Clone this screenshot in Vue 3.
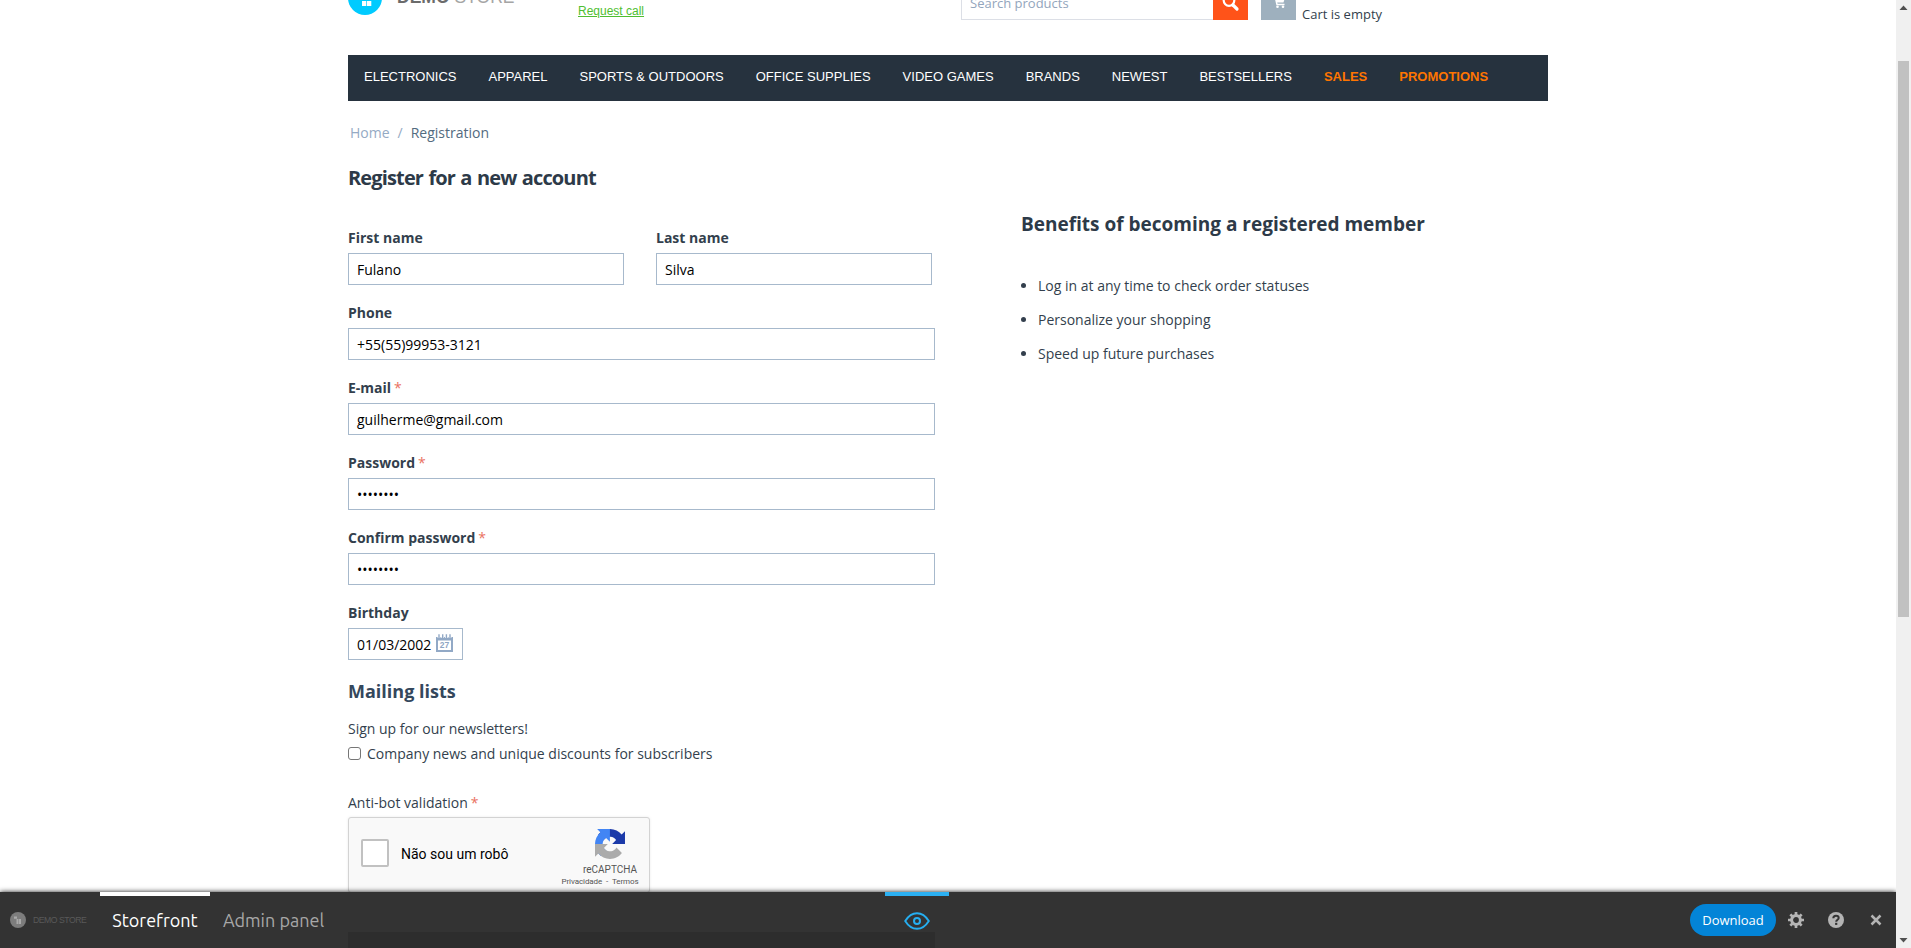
<script setup>
const menu = [
  { label: 'Electronics' }, { label: 'Apparel' }, { label: 'Sports & Outdoors' },
  { label: 'Office Supplies' }, { label: 'Video Games' }, { label: 'Brands' },
  { label: 'Newest' }, { label: 'Bestsellers' },
  { label: 'Sales', hot: true }, { label: 'Promotions', hot: true },
]
const fields = [
  { label: 'Phone', type: 'text', value: '+55(55)99953-3121' },
  { label: 'E-mail', type: 'text', value: 'guilherme@gmail.com', required: true },
  { label: 'Password', type: 'password', value: '••••••••', required: true },
  { label: 'Confirm password', type: 'password', value: '••••••••', required: true },
]
const benefits = [
  'Log in at any time to check order statuses',
  'Personalize your shopping',
  'Speed up future purchases',
]
</script>

<template>
  <div class="window">
    <div class="page">
      <div class="container">
        <header class="header">
          <div class="logo">
            <svg class="logo-mark" width="34" height="34" viewBox="0 0 34 34">
              <circle cx="17" cy="17" r="17" fill="#00cbff" />
              <path d="M13 14h5v5h-5zM19 14h5v5h-5zM14 20h4.300v5H14zM19 20h4.300v5H19z" fill="#fff" />
            </svg>
            <span class="logo-text"><b>DEMO</b><span>STORE</span></span>
          </div>
          <a class="request">Request call</a>
          <div class="search">
            <div class="search-box">Search products</div>
            <div class="search-btn">
              <svg width="35" height="36" viewBox="0 0 35 36">
                <circle cx="16" cy="16.500" r="5.300" fill="none" stroke="#fff" stroke-width="2.200" />
                <path d="M20 21l4 4" stroke="#fff" stroke-width="3.200" stroke-linecap="round" />
              </svg>
            </div>
          </div>
          <div class="cart">
            <div class="cart-btn">
              <svg width="35" height="36" viewBox="0 0 35 36">
                <path d="M11 12h3l2 8.500h7.500" fill="none" stroke="#fff" stroke-width="1.500" />
                <path d="M14.500 13.500H24l-1.500 5h-7z" fill="#fff" />
                <circle cx="16.500" cy="22.700" r="1.300" fill="#fff" />
                <circle cx="22" cy="22.700" r="1.300" fill="#fff" />
              </svg>
            </div>
            <span class="cart-text">Cart is empty</span>
          </div>
        </header>

        <nav class="menu">
          <a v-for="m in menu" :key="m.label" :class="{ hot: m.hot }">{{ m.label }}</a>
        </nav>

        <div class="crumbs"><a>Home</a><i>/</i><span>Registration</span></div>

        <div class="columns">
          <section class="form">
            <h1>Register for a new account</h1>
            <div class="pair">
              <div class="field"><label>First name</label><div class="input">Fulano</div></div>
              <div class="field"><label>Last name</label><div class="input">Silva</div></div>
            </div>
            <div v-for="f in fields" :key="f.label" class="field">
              <label>{{ f.label }}<em v-if="f.required">*</em></label>
              <div class="input" :class="f.type">{{ f.value }}</div>
            </div>
            <div class="field birthday">
              <label>Birthday</label>
              <div class="input">
                <span>01/03/2002</span>
                <svg width="17" height="18" viewBox="0 0 17 18">
                  <path d="M0 3h17v15H0z" fill="#92a9c6" />
                  <path d="M2 6.500h13V16H2z" fill="#fff" />
                  <path d="M3 0v4M6.700 0v4M10.400 0v4M14 0v4" stroke="#fff" stroke-width="2.800" />
                  <path d="M3 .3v4.200M6.700 .3v4.200M10.400 .3v4.200M14 .3v4.200" stroke="#92a9c6" stroke-width="1.400" />
                  <text x="8.500" y="14.300" text-anchor="middle" font-size="8.500" font-weight="700" fill="#8ea6c4" font-family="Liberation Sans, sans-serif">27</text>
                </svg>
              </div>
            </div>
            <h2>Mailing lists</h2>
            <p class="signup">Sign up for our newsletters!</p>
            <div class="check"><span class="box"></span>Company news and unique discounts for subscribers</div>
            <div class="antibot">Anti-bot validation<em>*</em></div>
            <div class="captcha">
              <span class="captcha-box"></span>
              <span class="captcha-label">Não sou um robô</span>
              <div class="captcha-brand">
                <svg width="30" height="30" viewBox="0 0 64 64">
                  <path d="M64 31.955l-.033-1.370V4.687l-7.160 7.160C50.948 4.674 42.033.093 32.050.093 21.660.093 12.430 5.040 6.586 12.700L18.324 24.560a15.550 15.550 0 0 1 4.754-5.334c2.050-1.600 4.952-2.906 8.968-2.906.485 0 .860.057 1.135.163 4.976.393 9.288 3.140 11.828 7.124l-8.307 8.307 27.300-.005" fill="#1c3aa9" />
                  <path d="M31.862.094l-1.370.033H4.594l7.160 7.160C4.580 13.147 0 22.060 0 32.046c0 10.388 4.945 19.618 12.607 25.463l11.860-11.740a15.550 15.550 0 0 1-5.334-4.754c-1.600-2.050-2.906-4.952-2.906-8.968 0-.485.057-.860.163-1.135.393-4.976 3.140-9.288 7.124-11.828l8.307 8.307L31.862.094" fill="#4285f4" />
                  <path d="M.001 32.045l.033 1.370v25.898l7.160-7.160c5.860 7.173 14.774 11.754 24.760 11.754 10.388 0 19.618-4.945 25.463-12.607l-11.740-11.860a15.550 15.550 0 0 1-4.754 5.334c-2.050 1.600-4.952 2.906-8.968 2.906-.485 0-.860-.057-1.135-.163-4.976-.393-9.288-3.140-11.828-7.124l8.307-8.307-27.300-.041" fill="#ababab" />
                </svg>
                <span class="brand-name">reCAPTCHA</span>
                <span class="brand-links">Privacidade&nbsp; - &nbsp;Termos</span>
              </div>
            </div>
            <div class="actions"></div>
          </section>

          <aside class="benefits">
            <h3>Benefits of becoming a registered member</h3>
            <ul><li v-for="b in benefits" :key="b">{{ b }}</li></ul>
          </aside>
        </div>
      </div>

      <footer class="panel">
        <div class="panel-left">
          <svg class="mini-mark" width="16" height="16" viewBox="0 0 16 16">
            <circle cx="8" cy="8" r="8" fill="#7d7d7d" />
            <path d="M4 4.500h3v2.300H4zM6.500 7h2v5h-2zM9 7h2v5H9z" fill="#aaa" />
          </svg>
          <span class="mini-name">DEMO STORE</span>
          <a class="tab active">Storefront</a>
          <a class="tab">Admin panel</a>
        </div>
        <div class="preview">
          <svg width="26" height="18" viewBox="0 0 26 18" fill="none" stroke="#26aef0">
            <path d="M1.200 9C4 4.500 8 1.200 13 1.200S22 4.500 24.800 9C22 13.500 18 16.800 13 16.800S4 13.500 1.200 9z" stroke-width="1.900" />
            <circle cx="13" cy="9" r="3" stroke-width="2" />
          </svg>
        </div>
        <div class="panel-right">
          <a class="download">Download</a>
          <svg width="16" height="16" viewBox="0 0 16 16">
            <circle cx="8" cy="8" r="4.400" fill="none" stroke="#b4b4b4" stroke-width="3" />
            <path d="M8 0v3M8 13v3M0 8h3M13 8h3M2.340 2.340l2.100 2.100M11.560 11.560l2.100 2.100M2.340 13.660l2.100-2.100M11.560 4.440l2.100-2.100" stroke="#b4b4b4" stroke-width="2.700" />
          </svg>
          <svg width="16" height="16" viewBox="0 0 16 16">
            <circle cx="8" cy="8" r="8" fill="#b4b4b4" />
            <path d="M5.300 6.200C5.300 4.500 6.500 3.700 8 3.700s2.700.9 2.700 2.300c0 1.700-2.500 1.800-2.500 3.700" fill="none" stroke="#333" stroke-width="2" />
            <path d="M7.100 10.800h2.200v2.100H7.100z" fill="#333" />
          </svg>
          <svg width="16" height="16" viewBox="0 0 16 16">
            <path d="M3.500 3.500l9 9M12.500 3.500l-9 9" stroke="#b4b4b4" stroke-width="2.500" />
          </svg>
        </div>
      </footer>
    </div>

    <div class="scrollbar">
      <svg width="15" height="15" viewBox="0 0 15 15"><path d="M7.500 5.500l4 4.500h-8z" fill="#505050" /></svg>
      <div class="thumb"></div>
      <svg width="15" height="15" viewBox="0 0 15 15"><path d="M7.500 9.500l4-4.500h-8z" fill="#505050" /></svg>
    </div>
  </div>
</template>

<style>
body { margin: 0; background: #fff; overflow: hidden; }
</style>

<style scoped>
* { box-sizing: border-box; }
svg { display: block; flex: none; }
.window { display: flex; height: 948px; overflow: hidden; font: 14px/20px "Open Sans", "Noto Sans", sans-serif; color: #333f4d; }
.page { position: relative; width: 1896px; height: 948px; overflow: hidden; }
.container { width: 1200px; margin-left: 348px; }

.header { display: flex; align-items: flex-start; height: 74px; margin-top: -19px; }
.logo { display: flex; width: 230px; }
.logo-text { display: flex; gap: 5px; margin: 4px 0 0 15px; font: 17.500px/24px "Liberation Sans", Arial, sans-serif; color: #a5a5a5; }
.logo-text b { color: #6b6b6b; }
.request { width: 383px; margin-top: 21px; font: 12px/18px "Liberation Sans", Arial, sans-serif; color: #4fbe31; text-decoration: underline; }
.search { display: flex; width: 300px; margin-top: 3px; }
.search-box { width: 252px; height: 36px; padding-left: 8px; border: 1px solid #dcdfe6; border-right: 0; font-size: 13px; line-height: 36px; color: #93a5bc; }
.search-btn { width: 35px; height: 36px; background: #ff5319; }
.cart { display: flex; margin-top: 3px; }
.cart-btn { width: 35px; height: 36px; background: #9eb0be; }
.cart-text { margin: 20px 0 0 6px; font-size: 13px; line-height: 20px; }

.menu { display: flex; height: 46px; background: #26323e; }
.menu a { padding: 0 16px; font: 13px/43px "Liberation Sans", Arial, sans-serif; text-transform: uppercase; color: #fff; }
.menu a.hot { font-weight: 700; color: #ff7500; }

.crumbs { display: flex; gap: 8px; margin: 22px 0 0 2px; height: 20px; color: #536b80; }
.crumbs a, .crumbs i { font-style: normal; color: #95aac4; }

.columns { display: flex; justify-content: space-between; }
.form { width: 587px; }
h1 { margin: 21px 0 36px; font-size: 20px; line-height: 28px; font-weight: 700; letter-spacing: -.860px; word-spacing: 1px; color: #2d3a48; white-space: nowrap; }
.pair { display: flex; gap: 32px; }
.pair .field { width: 276px; }
.field { margin-bottom: 18px; }
.field label { display: block; margin-bottom: 5px; font-weight: 700; }
em { margin-left: 3px; font-style: normal; font-weight: 400; color: #ea7162; }
.input { height: 32px; padding: 0 8px; border: 1px solid #a7b9cc; background: #fff; line-height: 32px; color: #000; }
.birthday .input { display: flex; justify-content: space-between; width: 115px; }
.birthday svg { margin: 5px 1px 0 0; }
h2 { margin: 19px 0 16px; font-size: 18px; line-height: 24px; font-weight: 700; color: #34475c; }
.signup { margin: 0 0 5px; }
.check { display: flex; align-items: center; gap: 6px; }
.box { width: 13px; height: 13px; margin-top: -1px; border: 1px solid #767676; border-radius: 3px; background: #fff; }
.antibot { margin: 29px 0 4px; }

.captcha { display: flex; width: 302px; height: 76px; border: 1px solid #d3d3d3; border-radius: 3px; background: #f9f9f9; box-shadow: 0 0 3px rgba(0, 0, 0, .08); font-family: Roboto, sans-serif; }
.captcha-box { width: 28px; height: 28px; margin: 21px 0 0 12px; border: 2px solid #c1c1c1; border-radius: 2px; background: #fff; }
.captcha-label { width: 148px; margin: 26px 0 0 12px; color: #000; line-height: 20px; }
.captcha-brand { display: flex; flex-direction: column; align-items: center; width: 76px; margin: 11px 0 0 13px; color: #555; white-space: nowrap; }
.captcha-brand svg { margin-left: 20px; }
.brand-name { margin: 5px 0 0 20px; font-size: 10px; line-height: 12px; }
.brand-links { font-size: 8px; line-height: 11px; letter-spacing: -.08px; }
.actions { height: 62px; margin-top: 39px; background: #26323e; }

.benefits { width: 527px; }
h3 { margin: 67px 0 38px; font-size: 19px; line-height: 28px; font-weight: 700; color: #2d3a48; white-space: nowrap; }
ul { margin: 0; padding-left: 17px; }
li { height: 20px; margin-bottom: 14px; }

.panel { position: absolute; left: 0; bottom: 0; display: flex; justify-content: space-between; width: 1896px; height: 56px; background: rgba(45, 45, 45, .972); box-shadow: 0 0 5px rgba(0, 0, 0, .9); }
.panel-left { display: flex; width: 885px; }
.mini-mark { margin: 20px 0 0 10px; }
.mini-name { width: 67px; margin-left: 7px; font: 8.700px/57px "Liberation Sans", Arial, sans-serif; letter-spacing: -.5px; color: #595959; }
.tab { width: 110px; height: 56px; margin-right: 1px; border-top: 4px solid transparent; font: 18px/48px "Ubuntu", "Noto Sans", sans-serif; text-align: center; color: #a8a8a8; }
.tab.active { border-color: #fff; color: #fff; }
.tab:last-child { width: 125px; }
.preview { display: flex; justify-content: center; width: 64px; border-top: 4px solid #2bb0f2; }
.preview svg { margin-top: 16px; }
.panel-right { display: flex; align-items: center; justify-content: flex-end; gap: 24px; width: 947px; padding-right: 12px; }
.download { width: 86px; height: 32px; margin-right: -12px; border-radius: 16px; background: #0384d7; font-size: 13px; line-height: 32px; text-align: center; color: #fff; }

.scrollbar { display: flex; flex-direction: column; align-items: center; justify-content: space-between; width: 15px; background: #f0f0f0; }
.thumb { width: 11px; height: 556px; margin: 46px 0 auto; background: #c1c1c1; }
</style>
